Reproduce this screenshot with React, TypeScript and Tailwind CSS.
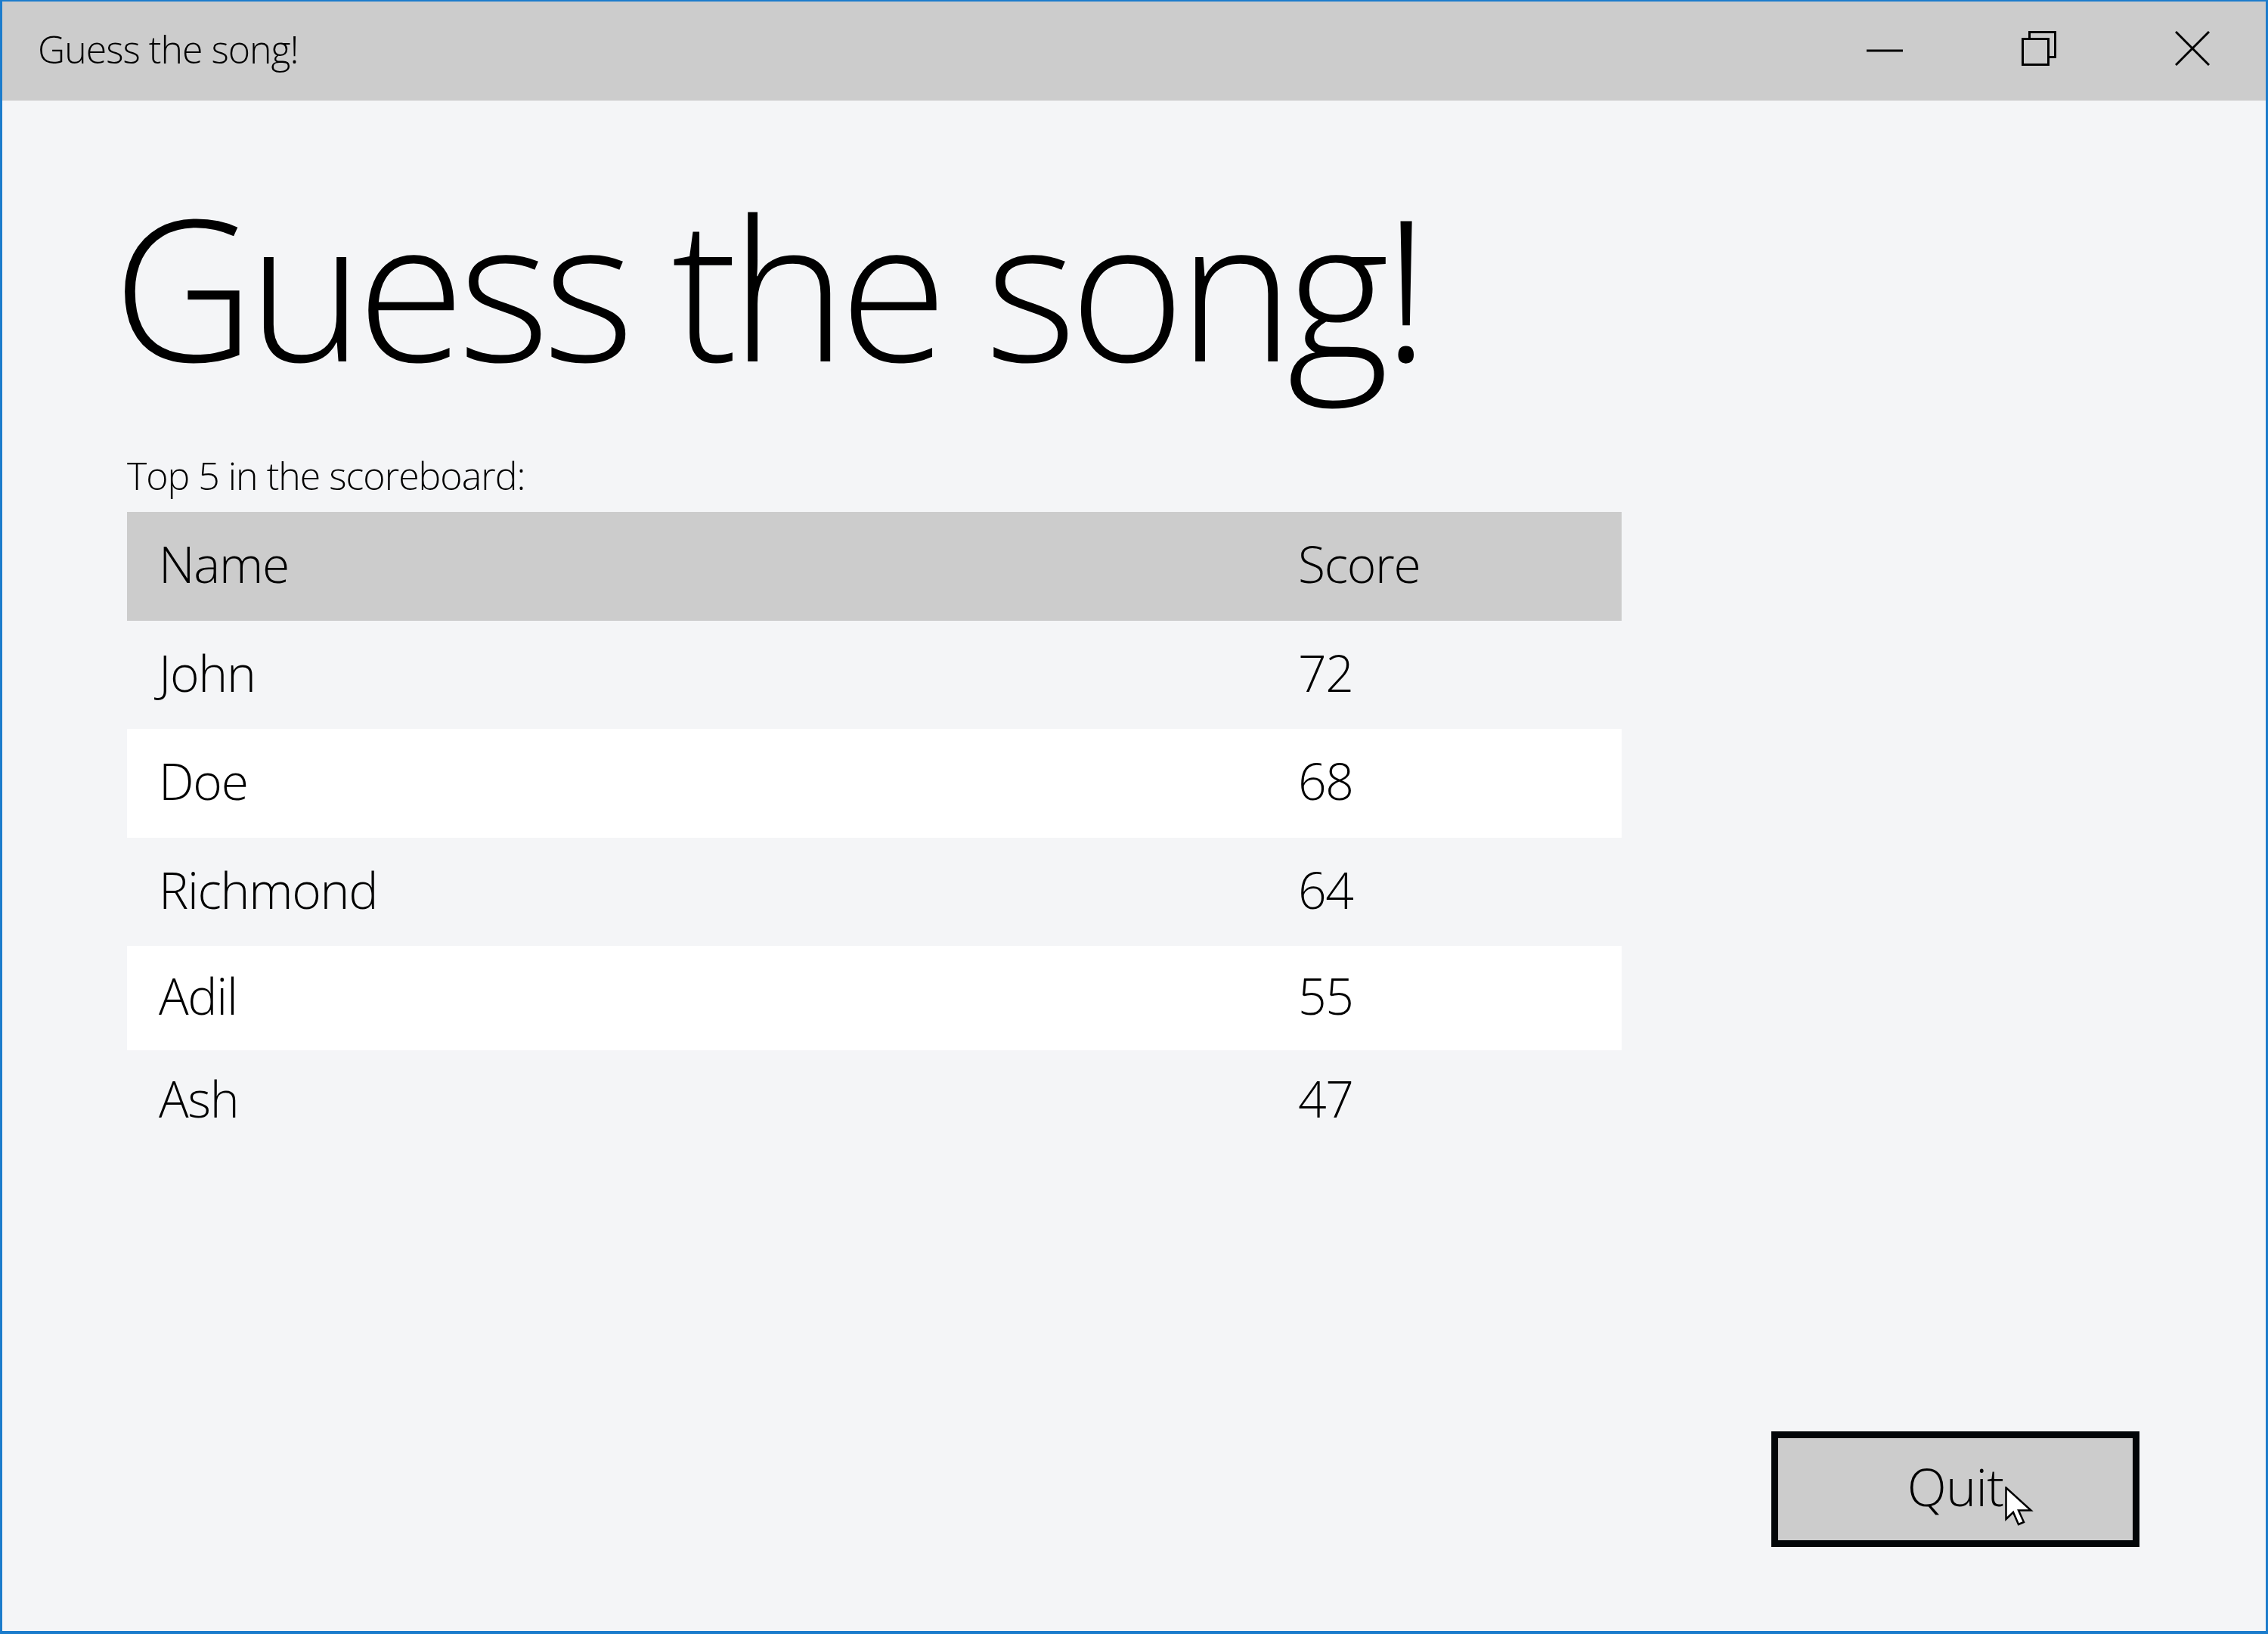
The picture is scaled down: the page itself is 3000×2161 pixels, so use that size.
import React from "react";

const scores = [
  { name: "John", score: 72, rowClass: "h-[143px]" },
  { name: "Doe", score: 68, rowClass: "h-[144px] bg-white" },
  { name: "Richmond", score: 64, rowClass: "h-[143px]" },
  { name: "Adil", score: 55, rowClass: "h-[138px] bg-white" },
  { name: "Ash", score: 47, rowClass: "h-[134px]" },
];

function WindowControls() {
  return (
    <div className="flex h-full items-center pb-[8px]">
      {/* minimize */}
      <div className="flex w-[196px] items-center justify-center">
        <svg width="50" height="50" viewBox="0 0 50 50">
          <line x1="1" y1="28" x2="49" y2="28" stroke="#000" strokeWidth="3" />
        </svg>
      </div>
      {/* restore */}
      <div className="flex w-[212px] items-center justify-center">
        <svg width="46" height="46" viewBox="0 0 46 46">
          <path d="M10.5 10.5 V1.5 H44.5 V34.5 H35.5" fill="none" stroke="#000" strokeWidth="3" />
          <rect x="1.5" y="10.5" width="34" height="34" fill="none" stroke="#000" strokeWidth="3" />
        </svg>
      </div>
      {/* close */}
      <div className="flex w-[194px] items-center justify-center">
        <svg width="46" height="46" viewBox="0 0 46 46">
          <line x1="1" y1="1" x2="45" y2="45" stroke="#000" strokeWidth="3" />
          <line x1="45" y1="1" x2="1" y2="45" stroke="#000" strokeWidth="3" />
        </svg>
      </div>
    </div>
  );
}

function Cursor() {
  return (
    <svg
      className="absolute left-[300px] top-[64px]"
      width="38"
      height="54"
      viewBox="0 0 38 54"
    >
      <path
        d="M1.5 1.5 V43 L11 34 L18 50 L25 47 L18 31.5 H34.5 Z"
        fill="#fff"
        stroke="#000"
        strokeWidth="2.5"
        strokeLinejoin="miter"
      />
    </svg>
  );
}

export default function App() {
  return (
    <div className="flex h-[2161px] w-[3000px] flex-col border-x-[3px] border-t-2 border-b-4 border-[#1c7ccc] bg-[#f4f5f7] font-['Open_Sans','Noto_Sans',sans-serif] font-light text-black">
      {/* title bar */}
      <div className="flex h-[131px] shrink-0 items-center justify-between bg-[#cccccc]">
        <div className="pb-[6px] pl-[47px] text-[50px] leading-none tracking-[-0.02em]">Guess the song!</div>
        <WindowControls />
      </div>

      {/* page */}
      <div className="flex flex-1 flex-col">
        <div className="pl-[165px]">
          <h1 className="-ml-[19px] mt-[114px] text-[260px] leading-none tracking-[-0.035em]">Guess the song!</h1>
          <p className="mt-[97px] text-[50px] leading-none tracking-[-0.02em]">Top 5 in the scoreboard:</p>

          <div className="mt-[23px] w-[1977px] text-[66px] leading-none tracking-[-0.02em]">
            <div className="flex h-[144px] items-center bg-[#cccccc] pb-[8px]">
              <div className="w-[1549px] pl-[42px]">Name</div>
              <div>Score</div>
            </div>
            {scores.map((row) => (
              <div key={row.name} className={`flex items-center pb-[8px] ${row.rowClass}`}>
                <div className="w-[1549px] pl-[42px]">{row.name}</div>
                <div>{row.score}</div>
              </div>
            ))}
          </div>
        </div>

        <div className="mt-auto flex justify-end pb-[111px] pr-[167px]">
          <button className="relative flex h-[153px] w-[487px] items-center justify-center border-[9px] border-[#030608] bg-[#cccccc] pb-[8px] text-[68px] leading-none tracking-[-0.01em]">
            Quit
            <Cursor />
          </button>
        </div>
      </div>
    </div>
  );
}
